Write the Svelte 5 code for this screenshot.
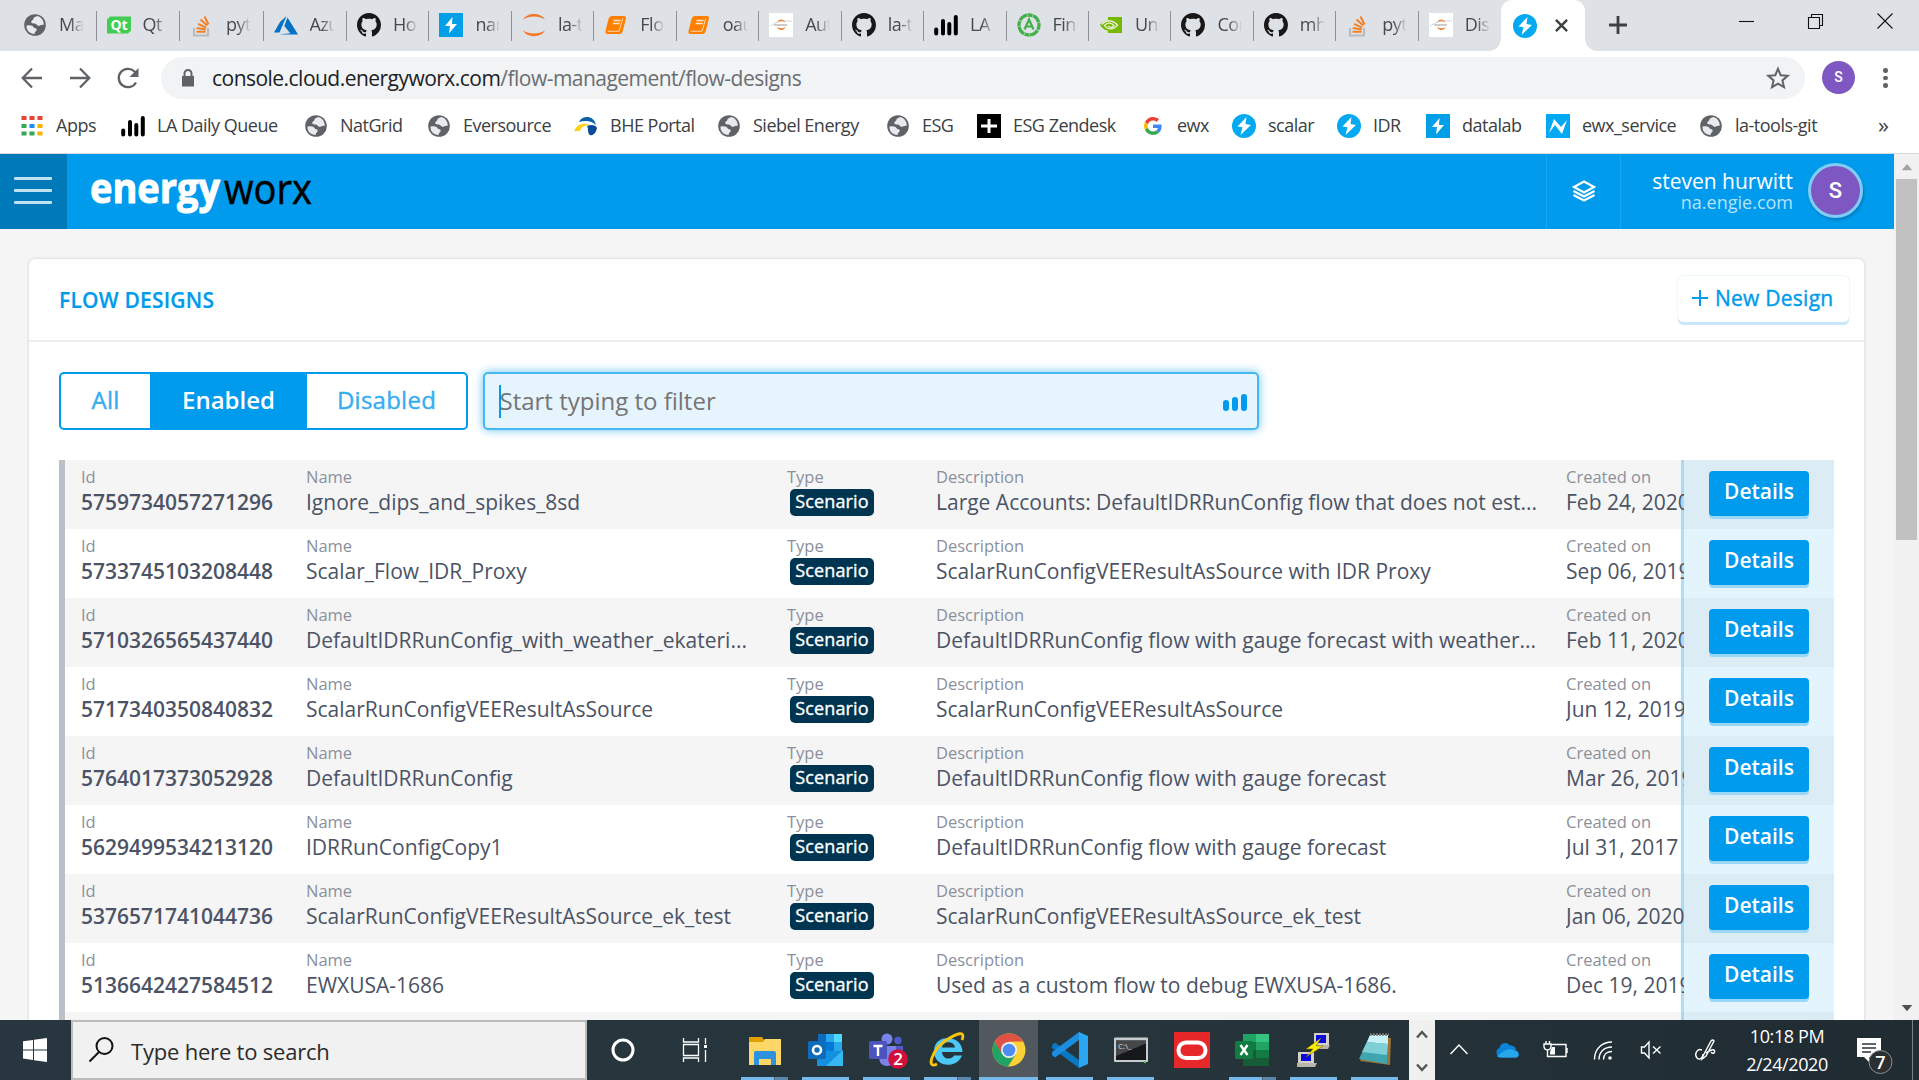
<script>
  const tabs = [
    ['globe', 'Mai'], ['qt', 'Qt'], ['stack', 'pyth'], ['azure', 'Azu'], ['github', 'Hor'],
    ['boltSquare', 'nam'], ['jupyter', 'la-t'], ['book', 'Flow'], ['book', 'oaut'], ['jupyterCard', 'Aut'],
    ['github', 'la-t'], ['bars', 'LA'], ['anaconda', 'Find'], ['nvidia', 'Uni'], ['github', 'Con'],
    ['github', 'mhe'], ['stack', 'pyth'], ['jupyterCard', 'Disc']
  ];

  // icon, label, item width
  const bookmarks = [
    ['apps', 'Apps', 101], ['bars', 'LA Daily Queue', 183], ['globe', 'NatGrid', 123],
    ['globe', 'Eversource', 147], ['bhe', 'BHE Portal', 143], ['globe', 'Siebel Energy', 169],
    ['globe', 'ESG', 91], ['plusSquare', 'ESG Zendesk', 164], ['google', 'ewx', 91],
    ['boltCircle', 'scalar', 105], ['boltCircle', 'IDR', 89], ['boltSquare', 'datalab', 120],
    ['nSquare', 'ewx_service', 153], ['globe', 'la-tools-git', 140]
  ];

  const rows = [
    ['5759734057271296', 'Ignore_dips_and_spikes_8sd', 'Large Accounts: DefaultIDRRunConfig flow that does not est...', 'Feb 24, 2020'],
    ['5733745103208448', 'Scalar_Flow_IDR_Proxy', 'ScalarRunConfigVEEResultAsSource with IDR Proxy', 'Sep 06, 2019'],
    ['5710326565437440', 'DefaultIDRRunConfig_with_weather_ekateri...', 'DefaultIDRRunConfig flow with gauge forecast with weather...', 'Feb 11, 2020'],
    ['5717340350840832', 'ScalarRunConfigVEEResultAsSource', 'ScalarRunConfigVEEResultAsSource', 'Jun 12, 2019'],
    ['5764017373052928', 'DefaultIDRRunConfig', 'DefaultIDRRunConfig flow with gauge forecast', 'Mar 26, 2019'],
    ['5629499534213120', 'IDRRunConfigCopy1', 'DefaultIDRRunConfig flow with gauge forecast', 'Jul 31, 2017'],
    ['5376571741044736', 'ScalarRunConfigVEEResultAsSource_ek_test', 'ScalarRunConfigVEEResultAsSource_ek_test', 'Jan 06, 2020'],
    ['5136642427584512', 'EWXUSA-1686', 'Used as a custom flow to debug EWXUSA-1686.', 'Dec 19, 2019']
  ];

  // icon, underline style
  const apps = [
    ['explorer', 'multi'], ['outlook', 'one'], ['teams', 'one'], ['ie', 'multi'], ['chrome', 'active'],
    ['vscode', 'one'], ['cmd', 'one'], ['oracle', 'none'], ['excel', 'multi'], ['putty', 'one'], ['notepad', 'one']
  ];
</script>

{#snippet icon(name)}
  <svg class="ico" viewBox="0 0 24 24">
    {#if name === 'globe'}
      <circle cx="12" cy="12" r="10.8" fill="#5f6368" />
      <path d="M3.500 12.500c2.500-.2 4.500-.5 6 .5 1.400 1 1.300 2 2.800 2.200 1.500.2 1.800 1.400 1 2.500-.7 1-1.800 1.400-1.600 3.300C6.500 20.800 3.200 17.500 3.500 12.500zM14.500 3c-1.500.8-4 1.200-4.100 2.800-.1 1.600-2.200 1.500-2.200 3.100 0 1.500 2.100 1.300 3.600 1.500 2 .2 2.200 2.200 3.700 2.400 1.700.2 1.900-1.500 5.300-1C20.800 7 18 4 14.500 3z" fill="#e8eaed" />
    {:else if name === 'qt'}
      <path d="M3 3.500h21v14L21 20.500H0v-14z" fill="#41cd52" />
      <text x="12" y="17" text-anchor="middle" font-size="14" font-weight="700" fill="#fff">Qt</text>
    {:else if name === 'stack'}
      <path d="M4 15v7.500h14V15" fill="none" stroke="#bcbbbb" stroke-width="2.200" />
      <g stroke="#f48024" stroke-width="2"><path d="M6.500 18.700h9M6.700 15l9 1.500M8 10.800l8 3.800M10.500 6.600l6.700 6M14.500 3.500l4 8" /></g>
    {:else if name === 'azure'}
      <path d="M12.500 3 6 9 0 19.500h5.500z" fill="#0072c6" /><path d="M13.500 4.500 10.300 13l6 7.200L5 21.500h19z" fill="#0072c6" />
    {:else if name === 'github'}
      <path transform="scale(1.5)" fill="#191717" d="M8 0C3.580 0 0 3.580 0 8c0 3.540 2.290 6.530 5.470 7.590.4.070.55-.17.55-.38 0-.19-.010-.82-.010-1.490-2.010.37-2.530-.49-2.690-.94-.090-.23-.48-.94-.82-1.130-.28-.15-.68-.52-.010-.53.63-.010 1.080.58 1.230.82.72 1.210 1.870.87 2.330.66.070-.52.28-.87.51-1.070-1.780-.2-3.640-.89-3.640-3.950 0-.87.31-1.590.82-2.150-.080-.2-.36-1.020.080-2.120 0 0 .67-.21 2.200.82.64-.18 1.320-.27 2-.27s1.360.090 2 .27c1.530-1.040 2.200-.82 2.200-.82.44 1.100.16 1.920.080 2.120.51.56.82 1.270.82 2.150 0 3.070-1.870 3.750-3.650 3.950.29.25.54.73.54 1.480 0 1.070-.010 1.930-.010 2.200 0 .21.15.46.55.38A8.010 8.010 0 0 0 16 8c0-4.420-3.580-8-8-8z" />
    {:else if name === 'boltSquare'}
      <path d="M0 0h24v24H0z" fill="#009fe8" /><path d="M13.500 4 6 13h5l-1 7.500L18 11h-5z" fill="#fff" />
    {:else if name === 'boltCircle'}
      <circle cx="12" cy="12" r="12" fill="#05a9f1" /><path d="M14.500 3 5.500 12.500l5 .8L8.500 21 19 11l-5.500-1z" fill="#fff" />
    {:else if name === 'nSquare'}
      <path d="M0 0h24v24H0z" fill="#05a9f1" /><path d="M3 19 8 5l7 8 6-7-5 14-7-9z" fill="#fff" />
    {:else if name === 'jupyter'}
      <path d="M1 6.500C5-1 19-1 23 6.500 17 2.500 7 2.500 1 6.500zM1 17.500c4 7.500 18 7.500 22 0-6 4-16 4-22 0z" fill="#f37726" />
    {:else if name === 'jupyterCard'}
      <path d="M0 0h24v24H0z" fill="#fff" />
      <path d="M8 9.500c1.500-4 7-4 8.500 0-2.500-1.800-6-1.800-8.500 0zM8 14c1.500 4 7 4 8.500 0-2.500 1.800-6 1.800-8.500 0z" fill="#f37726" />
      <path d="M1 13.500c5-5 15-7 22-5" stroke="#ccc" fill="none" stroke-width=".8" /><path d="M5 11.400h13v1.200H5z" fill="#aaa" />
    {:else if name === 'book'}
      <path d="M7.500 3h12.500q2.500.3 1.800 3l-3 12q-.8 3-3.300 3H3.500Q.8 20.500 1.500 18l3-12Q5.200 3.300 7.500 3z" fill="#ff8000" />
      <path d="M9.500 7.500h7M8.800 10.500h7" stroke="#ffe3c4" stroke-width="1.300" fill="none" /><path d="M3.500 18.300h11.500l3.800-13" stroke="#ffd9b0" stroke-width="1" fill="none" />
    {:else if name === 'bars'}
      <g stroke="#000" stroke-width="4" stroke-linecap="round"><path d="M2.200 16.500v4M9 8v12.500M15.300 11v9.500M21.800 4v16.500" /></g>
    {:else if name === 'anaconda'}
      <circle cx="12" cy="12" r="10" fill="none" stroke="#43b049" stroke-width="3.300" stroke-dasharray="5 .6 9 .5" />
      <path d="m7.500 16.500 4.500-10 4.500 10M9 13.500h6" stroke="#43b049" fill="none" stroke-width="2.200" />
    {:else if name === 'nvidia'}
      <path d="M9 4h14v16H9z" fill="#76b900" />
      <path d="M9 7.500C5 7.500 1.500 11 1 12c3 5 8 6.500 12 5.500 3-1 5-3 6-4.500-3-4-6-5.500-10-5.500z" fill="#76b900" />
      <path d="M3 11.500c4-5 11-4.500 15.500.5-4 5-10 5-13 .5 3-3.500 7-3 9.500 0-2 2.500-4.500 2.500-6 .3" stroke="#e8f2d4" stroke-width="1.300" fill="none" />
    {:else if name === 'apps'}
      <g fill="#ea4335"><path d="M1.500 2h5v4h-5zM9.500 2h5v4h-5zM17.500 2h5v4h-5z" /></g>
      <path d="M1.500 10h5v4h-5zM1.500 17.500h5v4h-5zM9.500 17.500h5v4h-5z" fill="#34a853" />
      <path d="M9.500 10h5v4h-5z" fill="#1a8cff" /><path d="M17.500 10h5v4h-5zM17.500 17.500h5v4h-5z" fill="#fbaf00" />
    {:else if name === 'bhe'}
      <path d="M5 8C8 1 20 1 22 11c-4-4-10-5-17-3z" fill="#0b62a8" /><path d="M0 17c3-7 10-9 16-6-5 0-9 2-10 6z" fill="#fcd116" />
      <path d="M13 12c4-2 9-1 10 2-1 5-4 8-7 7-3-2-1-6-3-9z" fill="#0b4b96" />
    {:else if name === 'plusSquare'}
      <path d="M0 0h24v24H0z" /><path d="M12 5v14M4 12h16" stroke="#fff" stroke-width="3" />
    {:else if name === 'google'}
      <g transform="translate(3 3) scale(.375)">
        <path fill="#EA4335" d="M24 9.500c3.540 0 6.710 1.220 9.210 3.600l6.850-6.850C35.900 2.380 30.470 0 24 0 14.620 0 6.510 5.380 2.560 13.220l7.980 6.190C12.430 13.720 17.740 9.500 24 9.500z" />
        <path fill="#4285F4" d="M46.980 24.550c0-1.570-.15-3.090-.38-4.550H24v9.020h12.940c-.58 2.960-2.260 5.480-4.780 7.180l7.730 6c4.510-4.180 7.090-10.360 7.090-17.650z" />
        <path fill="#FBBC05" d="M10.530 28.590c-.48-1.450-.76-2.990-.76-4.590s.27-3.140.76-4.590l-7.980-6.190C.92 16.460 0 20.120 0 24c0 3.880.92 7.540 2.560 10.780l7.970-6.190z" />
        <path fill="#34A853" d="M24 48c6.480 0 11.930-2.130 15.890-5.810l-7.730-6c-2.150 1.450-4.920 2.300-8.160 2.300-6.260 0-11.570-4.220-13.470-9.910l-7.980 6.190C6.510 42.620 14.620 48 24 48z" />
      </g>
    {/if}
  </svg>
{/snippet}

{#snippet appIcon(name)}
  <svg class="app-ico" viewBox="0 0 36 36">
    {#if name === 'explorer'}
      <path d="M2 5h13l3 4h16v24H2z" fill="#e0a100" /><path d="M2 10h14l2-3h16v26H2z" fill="#ffd767" />
      <path d="M7 33V21q0-2 2-2h18q2 0 2 2v12h-5v-6H12v6z" fill="#2f92dc" />
    {:else if name === 'outlook'}
      <path d="M10 2h23v26H10z" fill="#0f6cbd" /><path d="M18 2h8v12h-8z" fill="#28a8ea" /><path d="M26 2h8v12h-8z" fill="#50d9ff" />
      <path d="M18 10h8v10h-8z" fill="#0078d4" /><path d="M26 10h8v10h-8z" fill="#28a8ea" />
      <path d="M9 18l26 1v15H9z" fill="#1490df" /><path d="M35 18 18 34h17z" fill="#35b8f1" />
      <rect x="0" y="9" width="18" height="18" rx="1.500" fill="#0f6cbd" /><circle cx="9" cy="18" r="4" fill="none" stroke="#fff" stroke-width="2.600" />
    {:else if name === 'teams'}
      <circle cx="18" cy="7" r="5.500" fill="#7b83eb" /><circle cx="29" cy="8.500" r="3.700" fill="#5059c9" />
      <path d="M10 14h17v12q-2 8-9 8t-8-8z" fill="#7b83eb" /><path d="M27 14h7v10q-1 5-7 5z" fill="#5059c9" />
      <rect x="0" y="9" width="18" height="18" rx="1.500" fill="#4b53bc" /><path d="M4.500 14h9M9 14v10" stroke="#fff" stroke-width="2.400" />
      <circle cx="29" cy="27" r="9.800" fill="#d0103a" /><text x="29" y="33" text-anchor="middle" font-size="17" font-weight="600" fill="#fff">2</text>
    {:else if name === 'ie'}
      <path d="M32.500 20H12c.5 8 10 8 12 3.500h8C27 37 4 36 4 19 4 1 32.500 2 32.500 20zM12 15.500h13c-1-7-12-7-13 0z" fill="#4cc8f4" />
      <path d="M7 32C-5 38 3 17 15 9 27 1 36-2 32 8" fill="none" stroke="#fbc50c" stroke-width="2.800" />
    {:else if name === 'chrome'}
      <circle cx="18" cy="18" r="16.500" fill="#fdd036" /><path d="M3.700 9.700A16.500 16.500 0 0 1 32.300 9.800H18L10.500 22z" fill="#de5144" />
      <path d="M3.700 9.700A16.500 16.500 0 0 0 17 34.500L25 22l-14 0z" fill="#1fa463" /><path d="M18 9.800h14.300L25 22z" fill="#fdd036" />
      <circle cx="18" cy="18" r="8" fill="#f1f1f1" /><circle cx="18" cy="18" r="6.300" fill="#4e8cf2" />
    {:else if name === 'vscode'}
      <path d="m0 13 3-2.500L27 28v8L0 16z" fill="#0a78c0" />
      <path d="m0 23 3 2.500L27 8V0L0 20z" fill="#1b8ee0" /><path d="m27 0 9 4v28l-9 4z" fill="#2aa5f2" />
    {:else if name === 'cmd'}
      <rect x="1" y="5.500" width="34" height="24.500" rx="1" fill="#c8cccf" /><path d="M3 8.500h30V28H3z" fill="#17181a" /><path d="M3 8.500h30v3L3 24z" fill="#45484b" />
      <text x="5" y="17" font-size="8" fill="#ddd">C:\_</text><circle cx="32" cy="30" r="1.200" fill="#5c5" />
    {:else if name === 'oracle'}
      <path d="M0 0h36v36H0z" fill="#e6282b" /><rect x="4.500" y="10.500" width="27" height="15.500" rx="7.500" fill="none" stroke="#fff" stroke-width="4" />
    {:else if name === 'excel'}
      <path d="M8 2h26v32H8z" fill="#185c37" /><path d="M8 2h13v9H8z" fill="#21a366" /><path d="M21 2h13v9H21z" fill="#33c481" />
      <path d="M8 10h13v8H8z" fill="#107c41" /><path d="M21 10h13v8H21z" fill="#21a366" /><path d="M21 18h13v8H21z" fill="#107c41" />
      <rect x="0" y="9" width="18" height="18" rx="1.500" fill="#107c41" /><path d="m5.500 13 7 10M12.500 13l-7 10" stroke="#fff" stroke-width="2.400" />
    {:else if name === 'putty'}
      <path d="M18 1h15v12H18zM2 20h16v11H2z" fill="#d5d1c8" /><path d="M20 3h10v8H20zM5 22h10v7H5z" fill="#0a0ae0" />
      <path d="M15 13h19l-2 4H15zM1 31h20l-2 4H1z" fill="#b9b5ab" /><path d="M25 6 10 17h7l-7 8 17-11h-7z" fill="#ffee00" stroke="#665f00" stroke-width=".5" />
    {:else if name === 'notepad'}
      <path d="M14 4 34 6l-1 27L3 29z" fill="#9a7336" /><path d="M13 3h18l-1 29L2 27z" fill="#3fa6b0" /><path d="M13 3h18v9l-21-2z" fill="#c8f2f5" />
      <path d="M10 10 31 12l-1 11L5 20z" fill="#7fd0d6" /><path d="M13 2.500h19" stroke="#777" stroke-width="2.500" stroke-dasharray="2 1" />
    {/if}
  </svg>
{/snippet}

<div class="screen">
  <div class="tabstrip">
    {#each tabs as [ic, label]}
      <div class="tab">{@render icon(ic)}<span>{label}</span></div>
    {/each}
    <div class="tab-active">
      {@render icon('boltCircle')}
      <svg class="x" viewBox="0 0 14 14"><path d="m1 1 12 12M13 1 1 13" /></svg>
    </div>
    <svg class="newtab" viewBox="0 0 18 18"><path d="M9 0v18M0 9h18" /></svg>
    <div class="win">
      <svg viewBox="0 0 16 16"><path d="M0 8.500h15" /></svg>
      <svg viewBox="0 0 16 16"><path d="M.5 4.500h11v11H.5zM3.500 4.500v-3h11v11h-3" /></svg>
      <svg viewBox="0 0 16 16"><path d="m.5.5 15 15M15.500.5l-15 15" /></svg>
    </div>
  </div>

  <div class="toolbar">
    <div class="nav">
      <svg viewBox="0 0 22 22"><path d="M21 11H2M11 1.500 1.700 11l9.300 9.500" /></svg>
      <svg viewBox="0 0 22 22"><path d="M1 11h19M11 1.500l9.300 9.500-9.300 9.500" /></svg>
      <svg viewBox="0 0 22 22"><path d="M19 15.500A9.200 9.200 0 1 1 17.500 4.500L20 7.500" /><path class="solid" d="M21.500 1v9h-9z" /></svg>
    </div>
    <div class="omnibox">
      <svg class="lock" viewBox="0 0 14 18"><path d="M1 7h12v10.500H1z" fill="#5f6368" /><path d="M3.500 8V4.500a3.500 3.500 0 0 1 7 0V8" fill="none" stroke="#5f6368" stroke-width="2" /></svg>
      <span class="url"><b>console.cloud.energyworx.com</b>/flow-management/flow-designs</span>
      <svg class="star" viewBox="0 0 24 24"><path d="m12 2.800 2.700 6.400 7 .6-5.300 4.600 1.600 6.800-6-3.600-6 3.600 1.600-6.800-5.300-4.600 7-.6z" /></svg>
    </div>
    <div class="me">S</div>
    <div class="dots"><i></i><i></i><i></i></div>
  </div>

  <div class="bookmarks">
    {#each bookmarks as [ic, label, w]}
      <div class="bm" style:width="{w}px">{@render icon(ic)}<span>{label}</span></div>
    {/each}
    <span class="more">»</span>
  </div>

  <div class="viewport">
    <div class="page">
      <header>
        <div class="burger"><i></i><i></i><i></i></div>
        <svg class="logo" viewBox="0 0 230 75">
          <text class="l1" x="0" y="49" textLength="130" lengthAdjust="spacingAndGlyphs">energy</text>
          <text class="l2" x="134" y="49.500" textLength="88" lengthAdjust="spacingAndGlyphs">worx</text>
        </svg>
        <div class="layers">
          <svg viewBox="0 0 24 22"><path d="M12 1.500 22 7l-10 5.500L2 7z" /><path d="m1.500 11 10.500 5.500L22.500 11M1.500 15 12 20.500 22.500 15" /></svg>
        </div>
        <div class="user">
          <div class="who"><span class="nm">steven hurwitt</span><span class="org">na.engie.com</span></div>
          <div class="avatar">S</div>
        </div>
      </header>

      <section class="card">
        <div class="card-head">
          <h1>FLOW DESIGNS</h1>
          <div class="new"><svg viewBox="0 0 16 16"><path d="M8 0v16M0 8h16" /></svg><span>New Design</span></div>
        </div>
        <div class="filters">
          <div class="seg"><span class="all">All</span><span class="on">Enabled</span><span class="off">Disabled</span></div>
          <div class="input">
            <i class="caret"></i><span>Start typing to filter</span>
            <svg viewBox="0 0 24 17"><path d="M3 9v5M12 6v8M21 3v11" /></svg>
          </div>
        </div>
        <div class="table">
          {#each rows as [id, name, desc, date]}
            <div class="row">
              <div class="cell id"><label>Id</label><p>{id}</p></div>
              <div class="cell name"><label>Name</label><p>{name}</p></div>
              <div class="cell type"><label>Type</label><em>Scenario</em></div>
              <div class="cell desc"><label>Description</label><p>{desc}</p></div>
              <div class="cell date"><label>Created on</label><p>{date}</p></div>
              <div class="act"><div class="btn">Details</div></div>
            </div>
          {/each}
          <div class="row"><div class="act"></div></div>
        </div>
      </section>
    </div>
    <div class="scroll">
      <svg viewBox="0 0 12 8"><path d="m6 0 6 7H0z" fill="#a3a3a3" /></svg>
      <div class="thumb"></div>
      <svg viewBox="0 0 12 8"><path d="m6 7 6-7H0z" fill="#505050" /></svg>
    </div>
  </div>

  <div class="taskbar">
    <div class="start"><svg viewBox="0 0 24 24"><path d="M0 3.300 10 1.900v9.500H0zM11 1.700 24 0v11.400H11zM0 12.500h10V22L0 20.600zM11 12.500h13V24l-13-1.800z" /></svg></div>
    <div class="search">
      <svg viewBox="0 0 26 26"><circle cx="16.500" cy="9" r="8" /><path d="M11 15 1.500 24.500" /></svg>
      <span>Type here to search</span>
    </div>
    <div class="tb"><svg class="cort" viewBox="0 0 24 24"><circle cx="12" cy="12" r="10" /></svg></div>
    <div class="tb tv"><svg viewBox="0 0 24 24"><path d="M.5 0v4h15V0M.5 6.500h15v11H.5zM.5 24v-4h15v4M22.500 0v6M22.500 12v12" /><path d="M21 7h3v3h-3z" class="f" /></svg></div>
    <div class="apps">
      {#each apps as [ic, state]}
        <div class="app {state}">{@render appIcon(ic)}<i></i></div>
      {/each}
    </div>
    <div class="tscroll">
      <svg viewBox="0 0 12 8"><path d="m1 7 5-5.500L11 7" /></svg>
      <svg viewBox="0 0 12 8"><path d="m1 1 5 5.500L11 1" /></svg>
    </div>
    <div class="tray">
      <svg viewBox="0 0 24 24"><path d="m3.500 16 8.500-9 8.500 9" /></svg>
      <svg viewBox="0 0 24 24"><path class="p" d="M5.500 19.500a5 5 0 0 1-1-9.500C5 5.500 11 2.500 15 7.500c4 0 6 2 6 5 4 1 3.500 7 0 7z" fill="#0a84d8" /><path class="p" d="M2 18.500C7 14 9 13 11 12c5-2 8 1 9.500 1 4.500 1 3.500 6.500.5 6.500H5z" fill="#28a8ea" /></svg>
      <svg viewBox="0 0 24 24"><path d="M7 6.500h16v12H7M24 10v5M1 6h7v3q-.5 3-3.500 3T1 9zM3 6V3M6.500 6V3M4.500 12v6.500H7" /><path class="p" d="M9 9h3v7.500H7V14z" fill="#fff" /></svg>
      <svg viewBox="0 0 24 24"><path d="M3.500 21.500C3.500 11 11 4 21 4M8 21.500C8 14 13 9 21 9M12.500 21.500c0-5 3.500-8 8.500-8" /><circle cx="19" cy="20" r="1.800" fill="#fff" stroke="none" /></svg>
      <svg viewBox="0 0 24 24"><path d="M2.500 9h3L10 4v16l-4.500-5h-3zM14 8.500l7.500 7M21.500 8.500l-7.500 7" /></svg>
      <svg class="pen" viewBox="0 0 24 24"><path d="M10 18 18 3q2-2 3 0L13 18l-4 3zM9 12c-5-2-8 4-5 8 3 3 6-1 6-4M13 15c3-2 6-4 8-3 2 2-1 5-3 2" /></svg>
    </div>
    <div class="clock"><span>10:18 PM</span><span>2/24/2020</span></div>
    <div class="notif">
      <svg viewBox="0 0 36 38"><path d="M0 0h24v19H12v5l-5-5H0z" fill="#fff" /><path d="M5 6h14M5 10h14M5 14h9" stroke="#26343b" stroke-width="1.500" /><circle cx="23.500" cy="24" r="11.500" fill="#2b2f32" stroke="#8b8f92" /><text x="23.500" y="30.500" text-anchor="middle" font-size="18" font-weight="600" fill="#fff">7</text></svg>
    </div>
  </div>
</div>

<style>
  :global(body) { margin: 0; overflow: hidden; }
  .screen { width: 1919px; height: 1080px; display: flex; flex-direction: column; overflow: hidden; background: #fff; font-family: "Open Sans", "Noto Sans", sans-serif; box-sizing: border-box; }
  .screen :global(*) { box-sizing: border-box; }
  svg { display: block; flex: none; overflow: visible; }
  .ico { width: 24px; height: 24px; }

  .tabstrip { height: 51px; flex: none; background: #dee1e6; display: flex; align-items: flex-start; padding-left: 13px; }
  .tab { width: 82.450px; height: 30px; margin-top: 11px; border-right: 1.500px solid #8e9195; display: flex; align-items: center; padding-left: 10px; gap: 12px; flex: none; }
  .tab:nth-child(-n+4) { width: 83.500px; }
  .tab .ico { margin: -2px 0 0; }
  .tab span { width: 25px; overflow: hidden; white-space: nowrap; font-size: 18px; letter-spacing: -0.5px; line-height: 28px; margin-top: -4px; color: #45494d; -webkit-mask-image: linear-gradient(90deg, #000 45%, transparent); mask-image: linear-gradient(90deg, #000 45%, transparent); }
  .tab:nth-child(18) { border-right-color: transparent; }
  .tab-active { position: relative; width: 84px; height: 51px; background: #fff; border-radius: 11px 11px 0 0; display: flex; align-items: center; padding-left: 12px; gap: 18px; flex: none; }
  .tab-active::before, .tab-active::after { content: ""; position: absolute; bottom: 0; width: 12px; height: 12px; }
  .tab-active::before { left: -12px; background: radial-gradient(circle at 0 0, transparent 11.500px, #fff 12px); }
  .tab-active::after { right: -12px; background: radial-gradient(circle at 100% 0, transparent 11.500px, #fff 12px); }
  .x { width: 13px; height: 13px; stroke: #3c4043; stroke-width: 2.600; }
  .newtab { width: 18px; height: 18px; margin: 16px 0 0 24px; stroke: #3c4043; stroke-width: 2.800; }
  .win { margin: 13px 26px 0 auto; display: flex; gap: 53px; }
  .win svg { width: 16px; height: 16px; fill: none; stroke: #111; stroke-width: 1.100; }

  .toolbar { height: 54px; flex: none; display: flex; align-items: center; }
  .nav { display: flex; width: 161px; padding-left: 21px; gap: 26px; }
  .nav svg { width: 22px; height: 22px; fill: none; stroke: #5f6368; stroke-width: 2.300; }
  .nav .solid { fill: #5f6368; stroke: none; }
  .omnibox { width: 1644px; height: 42px; border-radius: 21px; background: #f1f3f4; display: flex; align-items: center; padding: 0 15px 0 20px; }
  .lock { width: 14px; height: 18px; }
  .url { margin: 0 auto 0 17px; font-size: 21px; letter-spacing: -0.53px; line-height: 30px; color: #6a6e73; white-space: nowrap; }
  .url b { font-weight: 400; color: #202124; }
  .star { width: 24px; height: 24px; fill: none; stroke: #5f6368; stroke-width: 2; }
  .me { width: 33px; height: 33px; margin-left: 17px; margin-top: -2px; border-radius: 50%; background: #7e57c2; color: #fff; font: 500 14px/33px Roboto, sans-serif; text-align: center; }
  .dots { margin-left: 28px; display: flex; flex-direction: column; gap: 3px; }
  .dots i { width: 4.500px; height: 4.500px; border-radius: 50%; background: #5f6368; }

  .bookmarks { height: 49px; flex: none; border-bottom: 1px solid #d5d8dc; display: flex; align-items: center; padding: 0 0 7px 20px; }
  .bm { display: flex; align-items: center; gap: 12px; flex: none; white-space: nowrap; font-size: 18px; letter-spacing: -0.5px; line-height: 26px; color: #3c4043; }
  .bm span { margin-top: -1px; }
  .bm .ico { margin-top: 1px; }
  .more { margin-left: 39px; font-size: 22px; color: #3c4043; line-height: 24px; margin-top: -4px; }

  .viewport { height: 866px; flex: none; display: flex; overflow: hidden; }
  .page { width: 1894px; height: 866px; overflow: hidden; background: #f5f5f5; }
  header { height: 75px; background: #009bec; display: flex; color: #fff; }
  .burger { width: 67px; background: #0079b9; display: flex; flex-direction: column; gap: 9px; padding: 23px 0 0 14px; }
  .burger i { width: 38px; height: 3px; border-radius: 1px; background: #bfe2f5; }
  .logo { width: 230px; height: 75px; margin-left: 23px; }
  .l1 { font-size: 42px; font-weight: 700; fill: #fff; stroke: #fff; stroke-width: 1; stroke-linejoin: round; }
  .l2 { font-size: 42px; font-weight: 400; fill: #000; stroke: #000; stroke-width: .5; }
  .layers { margin-left: auto; width: 75px; border-left: 1px solid #1ba7f0; border-right: 1px solid #1ba7f0; display: flex; align-items: center; justify-content: center; padding-bottom: 2px; }
  .layers svg { width: 24px; height: 22px; fill: none; stroke: #fff; stroke-width: 2.200; }
  .user { width: 273px; display: flex; justify-content: flex-end; padding-right: 31px; }
  .who { display: flex; flex-direction: column; text-align: right; padding-top: 13px; white-space: nowrap; }
  .nm { font-size: 21px; line-height: 28px; }
  .org { font-size: 18px; line-height: 20px; margin-top: -3px; color: #b5e1fa; }
  .avatar { width: 55px; height: 55px; margin: 9px 0 0 15px; border-radius: 50%; border: 3px solid #7fcdf5; background: #7e57c2; font: 500 22px/49px Roboto, sans-serif; text-align: center; box-shadow: 1px 2px 3px rgba(0,60,110,.35); }

  .card { margin: 30px 0 0 29px; width: 1835px; height: 900px; background: #fff; border-radius: 6px; box-shadow: 0 0 3px rgba(120,140,170,.4); }
  .card-head { height: 83px; border-bottom: 2px solid #ecedef; display: flex; justify-content: space-between; padding: 17px 15px 0 30px; }
  h1 { margin: 8px 0 0; font-size: 21px; line-height: 32px; font-weight: 600; letter-spacing: .2px; color: #009bec; -webkit-text-stroke: .2px; }
  .new { width: 171px; height: 46px; border-radius: 5px; background: #fff; box-shadow: 0 0 2px #bfe4f8, 0 3px 0 #c9e8f9; display: flex; align-items: center; padding: 0 0 2px 14px; gap: 7px; font-size: 21px; letter-spacing: .25px; color: #009bec; -webkit-text-stroke: .4px; white-space: nowrap; }
  .new svg { width: 16px; height: 16px; stroke: #009bec; stroke-width: 2; }
  .filters { display: flex; padding: 30px 0 0 30px; gap: 15px; }
  .seg { width: 409px; height: 58px; border: 2px solid #009bec; border-radius: 5px; display: flex; font-size: 24px; line-height: 52px; color: #36adf0; text-align: center; overflow: hidden; }
  .seg .all { width: 89px; letter-spacing: .25px; -webkit-text-stroke: .4px; }
  .seg .on { width: 157px; background: #009bec; color: #fff; font-weight: 600; }
  .seg .off { width: 159px; letter-spacing: .25px; -webkit-text-stroke: .4px; }
  .input { width: 776px; height: 58px; border: 2px solid #45b8f2; border-radius: 5px; background: #e5f4fd; box-shadow: 0 0 10px rgba(0,155,236,.6); display: flex; align-items: center; padding: 0 10px 0 14px; font-size: 24px; color: #757575; white-space: nowrap; }
  .input span { margin-top: -2px; }
  .caret { width: 2px; height: 33px; background: #009bec; margin-right: -1.500px; }
  .input svg { width: 24px; height: 17px; margin: 3px 0 0 auto; stroke: #009bec; stroke-width: 6; stroke-linecap: round; }

  .table { margin: 30px 0 0 30px; width: 1775px; border-left: 6px solid #babfc8; }
  .row { height: 69px; display: flex; justify-content: flex-end; background: #fff; }
  .row:nth-child(odd) { background: #f5f5f5; }
  .cell { flex: none; padding-top: 5px; overflow: hidden; white-space: nowrap; color: #4b5365; }
  .cell label { display: block; font-size: 16.500px; line-height: 24px; color: #8a909c; }
  .cell p { margin: 0; font-size: 21px; line-height: 27px; }
  .id { width: 241px; padding-left: 16px; }
  .id p { font-weight: 600; }
  .name { width: 481px; }
  .type { width: 149px; }
  .type em { display: block; width: 84px; height: 27px; margin-left: 3px; border-radius: 5px; background: #003552; color: #fff; font-style: normal; font-size: 18px; letter-spacing: .15px; -webkit-text-stroke: .35px; line-height: 25px; text-align: center; }
  .desc { width: 630px; }
  .date { position: relative; z-index: 1; width: 118px; }
  .act { flex: none; width: 153px; margin-left: -3px; border-left: 3px solid #addff9; background: #e3f4fd; padding: 11px 0 0 25px; }
  .row:nth-child(odd) .act { background: #dbecf5; border-left-color: #a7daf4; }
  .btn { width: 100px; height: 45px; border-radius: 4px; background: #009bec; box-shadow: 0 3px 0 #99d7f7; color: #fff; font-size: 21px; font-weight: 600; line-height: 41px; text-align: center; }

  .scroll { width: 25px; background: #f1f1f1; display: flex; flex-direction: column; align-items: center; padding: 10px 0 8px; }
  .scroll svg { width: 12px; height: 7px; }
  .thumb { width: 21px; height: 361px; background: #c1c1c1; margin: 8px 0 auto; }

  .taskbar { height: 60px; flex: none; background: linear-gradient(90deg, #28373f, #26353b 60%, #202b32); display: flex; color: #fff; }
  .start { width: 71px; display: flex; align-items: center; padding: 0 0 0 23px; }
  .start svg { width: 24px; height: 24px; fill: #fff; }
  .search { width: 516px; border: 2px solid #bcbcbc; background: #f1f1f1; display: flex; align-items: center; padding-left: 15px; color: #2b2b2b; font-size: 22px; gap: 17px; white-space: nowrap; }
  .search span { letter-spacing: -0.2px; padding-top: 2px; }
  .search svg { width: 26px; height: 26px; fill: none; stroke: #111; stroke-width: 2; }
  .tb { width: 72px; display: flex; align-items: center; justify-content: center; }
  .tb svg { width: 24px; height: 24px; fill: none; stroke: #fff; stroke-width: 1.300; }
  .tb .cort { stroke-width: 3; }
  .tb .f { fill: #fff; stroke: none; }
  .tv { width: 76px; padding-right: 4px; }
  .apps { display: flex; width: 674px; }
  .app { position: relative; width: 61px; flex: none; display: flex; align-items: center; justify-content: center; }
  .app:first-child { margin-left: -1px; }
  .app i { position: absolute; bottom: 0; left: 7px; width: 47px; height: 3px; background: #76b9ed; }
  .app.multi i { background: linear-gradient(90deg, #76b9ed 33px, #2f4a5c 33px, #5b87ab 34px); }
  .app.none i { display: none; }
  .app.active { background: linear-gradient(#51595e, #51595e) 1px 0 / 59px 100% no-repeat; }
  .app.active i { left: 1px; width: 59px; }
  .app-ico { width: 36px; height: 36px; }
  .tscroll { width: 26px; background: #f0f0f0; display: flex; flex-direction: column; align-items: center; justify-content: space-between; padding: 10px 0 8px; }
  .tscroll svg { width: 12px; height: 9px; fill: none; stroke: #555; stroke-width: 2.400; }
  .tray { display: flex; align-items: center; gap: 24px; padding-left: 12px; width: 297px; }
  .tray svg { width: 24px; height: 24px; fill: none; stroke: #fff; stroke-width: 1.400; }
  .tray .pen { margin-left: 6px; }
  .tray .p { stroke: none; }
  .clock { width: 110px; display: flex; flex-direction: column; align-items: center; font-size: 18px; letter-spacing: -0.4px; line-height: 28px; padding-top: 2px; white-space: nowrap; }
  .notif { margin-left: 15px; width: 56px; border-right: 1px solid #7a8388; padding-top: 18px; }
  .notif svg { width: 36px; height: 38px; }
</style>
